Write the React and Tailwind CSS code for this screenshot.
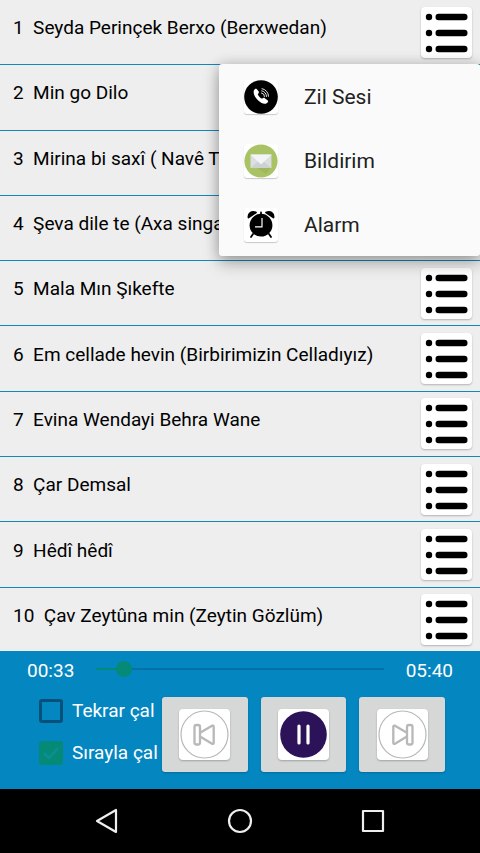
import React, { useState } from "react";
import clsx from "clsx";

const songs = [
  "Seyda Perinçek Berxo (Berxwedan)",
  "Min go Dilo",
  "Mirina bi saxî ( Navê Te",
  "Şeva dile te (Axa singa",
  "Mala Mın Şıkefte",
  "Em cellade hevin (Birbirimizin Celladıyız)",
  "Evina Wendayi Behra Wane",
  "Çar Demsal",
  "Hêdî hêdî",
  "Çav Zeytûna min (Zeytin Gözlüm)",
];

const formatTime = (seconds) => {
  const min = String(Math.floor(seconds / 60)).padStart(2, "0");
  const sec = String(seconds % 60).padStart(2, "0");
  return `${min}:${sec}`;
};

const ListIcon = () => (
  <svg viewBox="0 0 51 51" className="w-full h-full">
    {[10, 26, 42].map((y) => (
      <g key={y}>
        <circle cx="8" cy={y} r="3.2" />
        <rect x="14.5" y={y - 3.2} width="32" height="6.4" rx="3.2" />
      </g>
    ))}
  </svg>
);

const RingIcon = () => (
  <svg viewBox="0 0 34 34" className="w-full h-full">
    <circle cx="17" cy="17" r="16.8" fill="#000" />
    <path
      d="M10 10.200c.6-1.300 1.800-2 2.700-1.200l2 2.600c.6.9 0 1.700-.9 2.500.4 1.800 2.300 3.900 4.300 4.700.9-.9 1.800-1.300 2.700-.6l3 2.300c.8.9.100 2-1.100 2.800-1.500.9-3.500.6-5.500-.6-3.300-1.900-6.100-5.100-7.200-8.500-.5-1.700-.5-3 0-4z"
      fill="#fff"
    />
    <path
      d="M17.500 13a3.400 3.400 0 0 1 3 3.500M17.700 10.800a5.500 5.500 0 0 1 4.800 5.700M18 8.700a7.500 7.500 0 0 1 6.500 7.600"
      fill="none"
      stroke="#fff"
      strokeWidth=".9"
      strokeLinecap="round"
    />
  </svg>
);

const MailIcon = () => (
  <svg viewBox="0 0 34 34" className="w-full h-full">
    <circle cx="17" cy="17" r="16.600" fill="#a9c364" />
    <path d="M18 24 28 12v10l-6 8-9-6z" fill="#98b255" opacity=".6" />
    <rect x="6.500" y="10.500" width="21" height="13.500" fill="#dcdfe0" />
    <path d="M6.500 24 15 17h4l8.500 7z" fill="#cdd1d3" />
    <path d="M6.500 10.500h21L17 20.500z" fill="#f3f4f5" />
  </svg>
);

const AlarmIcon = () => (
  <svg viewBox="0 0 34 34" className="w-full h-full">
    <path d="M4.500 9.500C4 5.500 7.500 2.500 12 4.500zM29.500 9.500C30 5.500 26.500 2.500 22 4.500z" stroke="#000" strokeWidth="1.800" strokeLinejoin="round" />
    <path d="m9 26-2 3M25 26l2 3M17 4.500v3" stroke="#000" strokeWidth="1.800" strokeLinecap="round" />
    <circle cx="17" cy="17.200" r="11.400" />
    <path d="M18 10v8.800h-7" fill="none" stroke="#fff" strokeWidth="1.200" />
  </svg>
);

const PreviousIcon = () => (
  <svg viewBox="0 0 51 51" className="w-full h-full" fill="none" stroke="#b8b8b8" strokeLinejoin="round">
    <circle cx="25.500" cy="25.500" r="23.500" strokeWidth="1.200" />
    <rect x="15.500" y="16" width="5.500" height="19.500" rx="2" strokeWidth="2.300" />
    <path d="M21.500 23.500 33 16.700q1.700-.6 1.700 1v16q0 1.600-1.700 1L21.500 27.800" strokeWidth="2.300" />
  </svg>
);

const PauseIcon = () => (
  <svg viewBox="0 0 51 51" className="w-full h-full">
    <circle cx="25.500" cy="25.500" r="23.300" fill="#2b1259" />
    <path d="M21 17v17M30 17v17" stroke="#fff" strokeWidth="3.200" strokeLinecap="round" />
  </svg>
);

const NextIcon = () => (
  <svg viewBox="0 0 51 51" className="w-full h-full" fill="none" stroke="#b8b8b8" strokeLinejoin="round">
    <circle cx="25.500" cy="25.500" r="23.500" strokeWidth="1.200" />
    <rect x="30" y="16" width="5.500" height="19.500" rx="2" strokeWidth="2.300" />
    <path d="M29.500 23.500 18 16.700q-1.700-.6-1.700 1v16q0 1.600 1.700 1l11.500-6.900" strokeWidth="2.300" />
  </svg>
);

const menuItems = [
  { label: "Zil Sesi", Icon: RingIcon },
  { label: "Bildirim", Icon: MailIcon },
  { label: "Alarm", Icon: AlarmIcon },
];

const SongRow = ({ number, title, onMenu }) => (
  <li className="flex-1 flex items-center justify-between pl-[13px] pr-2 border-b border-[#1487b8]">
    <span className="pb-2 whitespace-pre">{`${number}  ${title}`}</span>
    <button
      onClick={onMenu}
      aria-label={title}
      className="shrink-0 w-[51px] h-[51px] rounded-[4px] bg-white shadow-[0_1px_2px_rgba(0,0,0,0.25)]"
    >
      <ListIcon />
    </button>
  </li>
);

const ContextMenu = () => (
  <div
    role="menu"
    className="absolute right-0 top-16 w-[261px] rounded-[3px] bg-[#fafafa] shadow-[0_8px_16px_rgba(0,0,0,0.25),0_0_14px_rgba(0,0,0,0.2)]"
  >
    {menuItems.map(({ label, Icon }) => (
      <button
        key={label}
        role="menuitem"
        className="w-full h-16 flex items-center gap-[26px] pt-px pl-[25px] text-[21px] text-[#212121]"
      >
        <span className="w-[34px] h-[34px] rounded-[3px] bg-white shadow-[0_1px_1px_rgba(0,0,0,0.2)]">
          <Icon />
        </span>
        {label}
      </button>
    ))}
  </div>
);

const CheckOption = ({ label, checked, onChange }) => (
  <label className="flex items-center gap-[9px] h-[42px] whitespace-nowrap">
    <span className="grid shrink-0 w-6 h-6">
      <input
        type="checkbox"
        checked={checked}
        onChange={onChange}
        className="col-start-1 row-start-1 appearance-none w-6 h-6 rounded-[3px] border-[3px] border-[#07507a] checked:border-[#058a78] checked:bg-[#058a78]"
      />
      {checked && (
        <svg viewBox="0 0 24 24" className="col-start-1 row-start-1 pointer-events-none">
          <path d="m5 12 5 5 9-10" fill="none" stroke="#0a8f98" strokeWidth="2.500" />
        </svg>
      )}
    </span>
    {label}
  </label>
);

const ControlButton = ({ label, onClick, children }) => (
  <button
    onClick={onClick}
    aria-label={label}
    className="flex-1 max-w-[120px] h-[75px] flex items-center justify-center rounded-[3px] bg-[#d6d7d7] shadow-[0_1px_2px_rgba(0,0,0,0.2)]"
  >
    <span className="w-[51px] h-[51px] rounded-[4px] bg-white shadow-[0_1px_2px_rgba(0,0,0,0.25)]">
      {children}
    </span>
  </button>
);

const Player = () => {
  const duration = 340;
  const [position, setPosition] = useState(33);
  const [repeat, setRepeat] = useState(false);
  const [inOrder, setInOrder] = useState(true);
  const percent = (position / duration) * 100;

  return (
    <section className="relative h-[138px] bg-[#0486c0] text-white">
      <div className="flex items-center gap-[14px] h-10 px-[27px]">
        <span>{formatTime(position)}</span>
        <input
          type="range"
          min="0"
          max={duration}
          value={position}
          onChange={(e) => setPosition(Number(e.target.value))}
          aria-label="Seek"
          className="flex-1 min-w-0 h-4 mb-1 appearance-none bg-center bg-no-repeat bg-[length:calc(100%-16px)_2px] [&::-webkit-slider-thumb]:appearance-none [&::-webkit-slider-thumb]:w-4 [&::-webkit-slider-thumb]:h-4 [&::-webkit-slider-thumb]:rounded-full [&::-webkit-slider-thumb]:bg-[#058a78]"
          style={{
            backgroundImage: `linear-gradient(to right, #058a78 ${percent}%, #0470a6 ${percent}%)`,
          }}
        />
        <span>{formatTime(duration)}</span>
      </div>
      <div className="flex pl-[39px] pr-[35px] pt-[6px]">
        <div className="w-[123px] shrink-0 -mt-[7px]">
          <CheckOption label="Tekrar çal" checked={repeat} onChange={() => setRepeat(!repeat)} />
          <CheckOption label="Sırayla çal" checked={inOrder} onChange={() => setInOrder(!inOrder)} />
        </div>
        <div className="flex-1 flex gap-[13px]">
          <ControlButton label="Previous">
            <PreviousIcon />
          </ControlButton>
          <ControlButton label="Pause">
            <PauseIcon />
          </ControlButton>
          <ControlButton label="Next">
            <NextIcon />
          </ControlButton>
        </div>
      </div>
    </section>
  );
};

const NavigationBar = () => (
  <nav className="relative flex h-16 px-10 bg-black">
    <button aria-label="Back" className="flex-1 flex items-center justify-center">
      <svg viewBox="0 0 28 28" className="w-7 h-7" fill="none" stroke="#eee" strokeWidth="2.200" strokeLinejoin="round">
        <path d="M4 14 23 3v22z" />
      </svg>
    </button>
    <button aria-label="Home" className="flex-1 flex items-center justify-center">
      <svg viewBox="0 0 28 28" className="w-7 h-7" fill="none" stroke="#eee" strokeWidth="2.200">
        <circle cx="14" cy="14" r="11" />
      </svg>
    </button>
    <button aria-label="Recent apps" className="flex-1 flex items-center justify-center">
      <svg viewBox="0 0 28 28" className="w-7 h-7" fill="none" stroke="#eee" strokeWidth="2.200" strokeLinejoin="round">
        <rect x="4" y="4" width="20" height="20" />
      </svg>
    </button>
  </nav>
);

export default function App() {
  const [menuOpen, setMenuOpen] = useState(true);

  return (
    <div
      className={clsx(
        "relative min-h-screen flex flex-col overflow-hidden bg-[#eee] text-black",
        "font-[Roboto,sans-serif] text-[19px] leading-6"
      )}
    >
      {/* The last row runs slightly under the player */}
      <ul className="flex-1 flex flex-col -mb-[2px]">
        {songs.map((title, i) => (
          <SongRow
            key={title}
            number={i + 1}
            title={title}
            onMenu={() => setMenuOpen(!menuOpen)}
          />
        ))}
      </ul>
      <Player />
      <NavigationBar />
      {menuOpen && <ContextMenu />}
    </div>
  );
}
